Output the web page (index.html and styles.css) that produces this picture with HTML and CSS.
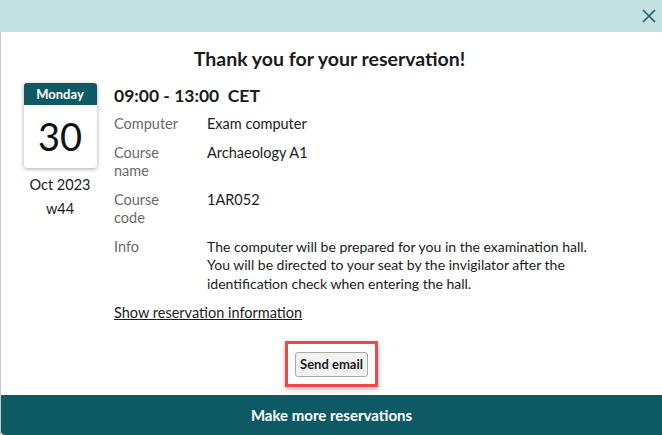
FILE: index.html
```html
<!DOCTYPE html>
<html>
<head>
<meta charset="utf-8">
<link rel="stylesheet" href="styles.css">
</head>
<body>
<div class="page">
  <div class="edge"></div>
  <div class="dialog">
    <div class="topbar">
      <svg class="close" width="14" height="14" viewBox="0 0 14 14"><path d="M1 1L13 13M13 1L1 13" stroke="#1d5f66" stroke-width="1.6" fill="none"/></svg>
    </div>
    <div class="content">
      <h1 class="title">Thank you for your reservation!</h1>
      <div class="booking">
        <div class="datecol">
          <div class="cal">
            <div class="cal-day">Monday</div>
            <div class="cal-num">30</div>
          </div>
          <div class="month">Oct 2023</div>
          <div class="week">w44</div>
        </div>
        <div class="details">
          <div class="time">09:00 - 13:00&nbsp; CET</div>
          <div class="grid">
            <div class="label">Computer</div><div class="value">Exam computer</div>
            <div class="label">Course<br>name</div><div class="value">Archaeology A1</div>
            <div class="label">Course<br>code</div><div class="value">1AR052</div>
            <div class="label">Info</div><div class="value info">The computer will be prepared for you in the examination hall. You will be directed to your seat by the invigilator after the identification check when entering the hall.</div>
          </div>
          <a class="show">Show reservation information</a>
        </div>
      </div>
      <div class="sendwrap">
        <div class="highlight"><button class="send">Send email</button></div>
      </div>
    </div>
    <div class="more">Make more reservations</div>
  </div>
</div>
</body>
</html>
```
FILE: styles.css
```css
html, body { margin: 0; padding: 0; }
body {
  width: 662px; height: 435px; overflow: hidden;
  font-family: "Lato", "Liberation Sans", sans-serif;
  color: #1b1b1b;
  background: #fff;
}
.page { display: flex; height: 435px; }
.edge {
  width: 1px; background: #c8c8c8;
  margin-top: 32px;
}
.dialog {
  flex: 1; display: flex; flex-direction: column; height: 435px;
  background: #fff;
}
.topbar {
  height: 32px; background: #c3e1e3;
  display: flex; justify-content: flex-end; align-items: center;
  padding-right: 6px; margin-left: -1px;
}
.close { display: block; }
.content { flex: 1; display: flex; flex-direction: column; }
.title {
  margin: 15px 0 0; text-align: center;
  font-size: 19.5px; font-weight: 700; line-height: 24px;
  padding-right: 4px;
}
.booking { display: flex; margin-top: 12px; }
.datecol {
  width: 74px; margin-left: 22px; display: flex; flex-direction: column; align-items: center;
}
.cal {
  width: 73px; height: 85px; border-radius: 3px; overflow: hidden;
  box-shadow: 0 1px 4px rgba(0,0,0,0.35);
  background: #fff;
}
.cal-day {
  height: 22px; background: #0e5a64; color: #fff;
  font-size: 13px; font-weight: 700; text-align: center; line-height: 23px;
}
.cal-num {
  font-size: 38px; text-align: center; line-height: 62px; color: #111;
}
.month { margin-top: 8px; font-size: 14.5px; line-height: 18px; }
.week { margin-top: 6px; font-size: 14.5px; line-height: 18px; }
.details { margin-left: 17px; flex: 1; }
.time { font-size: 17.5px; font-weight: 700; line-height: 22px; margin-top: 2px; }
.grid {
  display: grid; grid-template-columns: 93px 1fr;
  row-gap: 10px; margin-top: 8px;
  font-size: 14.5px; line-height: 18.5px;
}
.label { color: #6a6a6a; }
.value { padding-right: 40px; }
.info { font-size: 14px; max-width: 400px; }
.show {
  display: inline-block; margin-top: 11px;
  font-size: 14.5px; line-height: 18px; text-decoration: underline; color: #1b1b1b;
}
.sendwrap { display: flex; justify-content: center; margin-top: 19px; }
.highlight {
  border: 3px solid #f04848; padding: 8px 7px 7px 7px;
  box-shadow: 0 2px 5px rgba(0,0,0,0.3);
}
.send {
  font-family: inherit; font-size: 13px; font-weight: 700; color: #1b1b1b;
  background: #f2f2f2; border: 1px solid #a9a9a9; border-radius: 3px;
  padding: 3px 4px; line-height: 17px; display: block;
}
.more {
  height: 40px; background: #0e5a64; color: #fff;
  display: flex; align-items: center; justify-content: center;
  font-size: 15px; font-weight: 700;
  border-bottom-left-radius: 4px;
}
```
